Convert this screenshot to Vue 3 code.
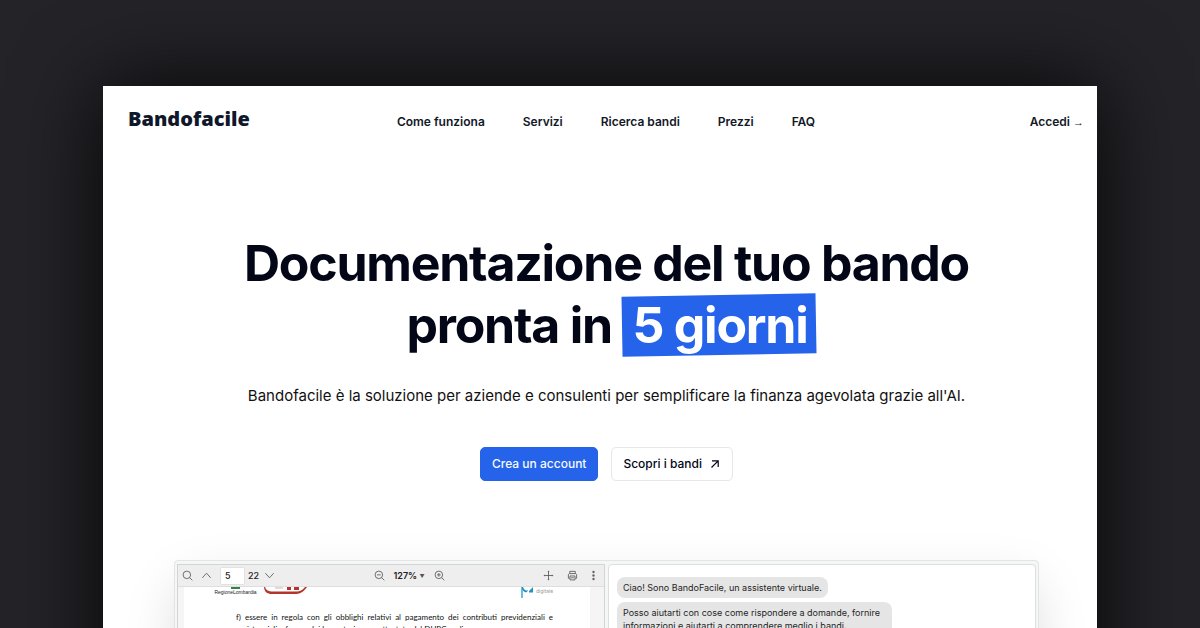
<script setup>
const links = ['Come funziona', 'Servizi', 'Ricerca bandi', 'Prezzi', 'FAQ']
</script>

<template>
  <div class="stage">
    <div class="page">
      <header class="header">
        <a class="brand" href="#">Bandofacile</a>
        <nav class="nav">
          <a v-for="link in links" :key="link" href="#">{{ link }}</a>
        </nav>
        <a class="login" href="#">Accedi <span class="arrow">→</span></a>
      </header>

      <main class="main">
        <h1>Documentazione del tuo bando<br />pronta in <span class="mark"><span class="mark-text">5 giorni</span></span></h1>
        <p class="lead">Bandofacile è la soluzione per aziende e consulenti per semplificare la finanza agevolata grazie all'AI.</p>
        <div class="actions">
          <button class="btn primary" type="button">Crea un account</button>
          <button class="btn" type="button">
            Scopri i bandi
            <svg width="12" height="12" viewBox="0 0 12 12" fill="none" stroke="currentColor" stroke-width="1.2"><path d="M2.500 9.500 9.200 2.800M3 2.800h6.200V9" /></svg>
          </button>
        </div>

        <section class="preview">
          <div class="pane viewer">
            <div class="toolbar">
              <svg class="ico" viewBox="0 0 12 12"><circle cx="5.300" cy="5.300" r="4.100" /><path d="m8.300 8.300 3 3" /></svg>
              <svg class="ico" viewBox="0 0 12 12"><path d="m1.500 8.500 4.500-5 4.500 5" /></svg>
              <input class="num" type="text" value="5" aria-label="Pagina" />
              <span class="total">22</span>
              <svg class="ico" viewBox="0 0 12 12"><path d="m1.500 3.500 4.500 5 4.500-5" /></svg>
              <div class="zoom">
                <svg class="ico" viewBox="0 0 12 12"><circle cx="5.300" cy="5.300" r="4.100" /><path d="m8.300 8.300 3 3M3.300 5.300h4" /></svg>
                <span class="pct">127% <span class="tri">▼</span></span>
                <svg class="ico" viewBox="0 0 12 12"><circle cx="5.300" cy="5.300" r="4.100" /><path d="m8.300 8.300 3 3M3.300 5.300h4M5.300 3.300v4" /></svg>
              </div>
              <div class="tools">
                <svg class="ico" viewBox="0 0 12 12"><path d="M6 1.500v9M1.500 6h9" /><path d="M6 .5 4.800 2.300h2.400zM6 11.500 4.800 9.700h2.400zM.5 6l1.800-1.200v2.400zM11.500 6 9.700 4.800v2.400z" class="solid" /></svg>
                <svg class="ico" viewBox="0 0 12 12"><path d="M3 3.700V1.500h6v2.200M3 9H1.500V5.200l1-1.300h7l1 1.300V9H9M3.300 6.500h5.400v4.300H3.300zM4.500 8.500h3" /></svg>
                <svg class="ico dots" viewBox="0 0 5 12"><circle cx="2.500" cy="2.200" r="1.300" /><circle cx="2.500" cy="6" r="1.300" /><circle cx="2.500" cy="9.800" r="1.300" /></svg>
              </div>
            </div>
            <div class="doc">
              <div class="sheet">
                <div class="logos">
                  <div class="region"><i></i><span>RegioneLombardia</span></div>
                  <svg width="46" height="8" viewBox="0 0 46 8"><path d="M1 0C1.500 5 4 7 9 7h24c5 0 8-3 11-7h-2c-3 3.500-5 4.500-9 4.500H10C5 4.500 3 3 2 0z" fill="#b5342c" /><path d="M24 0h4v3h-4zM31 0h5v3h-5z" fill="#b5342c" /><path d="M12 1h8" stroke="#bbb" /></svg>
                  <svg class="agency" width="13" height="12" viewBox="0 0 13 12"><path d="M1 0v11" stroke="#1f9bd0" stroke-width="1.300" /><path d="M1 0h1c1 3 3 4 5 3l-1 2C4 6 2 4 1 2zM8 4l4-4v5.500H8z" fill="#2294c3" /></svg>
                  <span class="digital">digitale</span>
                </div>
                <p class="clause"><span>f) essere in regola con gli obblighi relativi al pagamento dei contributi previdenziali e</span><span class="rest">assistenziali a favore dei lavoratori come attestato dal DURC on line;</span></p>
              </div>
            </div>
          </div>
          <div class="pane chat">
            <p class="bubble">Ciao! Sono BandoFacile, un assistente virtuale.</p>
            <p class="bubble">Posso aiutarti con cose come rispondere a domande, fornire informazioni e aiutarti a comprendere meglio i bandi.</p>
          </div>
        </section>
      </main>
    </div>
  </div>
</template>

<style>
body {
  background: #242328;
}
</style>

<style scoped>
* {
  box-sizing: border-box;
}
.stage {
  height: 100vh;
  overflow: hidden;
  padding: 86px 103px 0;
  font-family: Inter, "Liberation Sans", sans-serif;
  color: #020617;
}
.page {
  min-height: 100%;
  background: #fff;
  box-shadow: 0 0 80px 0 rgba(0, 0, 0, 0.9);
}
a {
  color: inherit;
  text-decoration: none;
}
.header {
  display: flex;
  align-items: center;
  height: 72px;
  padding: 0 13px 0 25px;
}
.brand {
  flex: 1;
  font: 800 20px/28px "Open Sans", sans-serif;
  color: #0f172a;
  padding-bottom: 6px;
}
.nav {
  display: flex;
  gap: 38px;
}
.nav,
.login {
  font-size: 12px;
  line-height: 20px;
  font-weight: 600;
  color: #111827;
}
.login {
  flex: 1;
  text-align: right;
}
.arrow {
  font: 11px "Liberation Sans", sans-serif;
}
.main {
  padding: 74px 58px 0 71px;
  text-align: center;
}
h1 {
  margin: 0;
  font-size: 50px;
  line-height: 62px;
  font-weight: 700;
  letter-spacing: -0.025em;
}
.mark {
  position: relative;
  display: inline-block;
  margin-right: -10px;
  padding: 0 9px 0 10px;
  color: #fff;
}
.mark::before {
  content: "";
  position: absolute;
  inset: 1px 0;
  background: #2563eb;
  transform: rotate(-1deg);
}
.mark-text {
  position: relative;
}
.lead {
  margin: 26px 0 0;
  font-size: 15px;
  line-height: 28px;
  color: #111;
}
.actions {
  display: flex;
  justify-content: center;
  gap: 13px;
  margin-top: 37px;
}
.btn {
  display: flex;
  align-items: center;
  gap: 7px;
  height: 34px;
  padding: 0 11px;
  border: 1px solid #e5e7eb;
  border-radius: 5px;
  background: #fff;
  color: #020617;
  font: 500 12px/18px Inter, sans-serif;
}
.primary {
  border-color: #2563eb;
  background: #2563eb;
  color: #f8fafc;
}
.preview {
  display: grid;
  grid-template-columns: 1fr 1fr;
  gap: 3px;
  height: 360px;
  margin-top: 79px;
  padding: 3px 2px;
  border: 1px solid #e2e5e5;
  border-radius: 4px;
  background: #f5f7f7;
  box-shadow: 0 20px 50px -5px rgba(0, 0, 0, 0.15);
  text-align: left;
}
.pane {
  min-width: 0;
  border: 1px solid #dcdfdf;
  background: #fff;
  overflow: hidden;
}
.viewer {
  border-color: #d4d4d6;
}
.toolbar {
  display: flex;
  align-items: center;
  gap: 8px;
  height: 22px;
  padding: 0 8px 0 4px;
  background: #eeeeef;
  border-bottom: 1px solid #dededf;
  font-size: 9px;
  font-weight: 500;
  color: #222;
}
.ico {
  flex: none;
  width: 11px;
  height: 11px;
  fill: none;
  stroke: #555;
  stroke-width: 0.9;
}
.solid,
.dots {
  fill: #666;
  stroke: none;
}
.dots {
  width: 5px;
}
.num {
  width: 25px;
  height: 18px;
  padding: 0 4px;
  border: 1px solid #e2e2e3;
  border-radius: 2px;
  background: #fff;
  color: #222;
  font: 500 9px/16px Inter, sans-serif;
}
.total {
  margin: 0 -3px 0 -5px;
}
.zoom {
  display: flex;
  align-items: center;
  gap: 9px;
  margin: 0 auto;
}
.pct {
  font-weight: 600;
}
.tri {
  font-size: 5px;
  vertical-align: 1px;
  color: #555;
}
.tools {
  display: flex;
  align-items: center;
  gap: 13px;
}
.doc {
  background: #f5f5f6;
  height: 100%;
  padding: 0 14px 0 6px;
}
.sheet {
  height: 100%;
  padding: 0 37px 0 31px;
  background: #fff;
}
.logos {
  display: flex;
  align-items: flex-start;
  height: 24px;
}
.region {
  display: flex;
  flex-direction: column;
  align-items: center;
  width: 41px;
  margin-right: 7px;
  font: 5px/6px "Liberation Sans", sans-serif;
  color: #222;
}
.region i {
  width: 9px;
  height: 2px;
  background: #34804a;
}
.agency {
  margin-left: auto;
}
.digital {
  margin-left: 2px;
  width: 17px;
  font-size: 5px;
  line-height: 8px;
  color: #999;
}
.clause {
  margin: 0 0 0 21px;
  font: 8px/12px Lato, sans-serif;
  color: #111;
}
.clause span {
  display: block;
  text-align: justify;
  text-align-last: justify;
}
.clause .rest {
  text-align-last: left;
}
.chat {
  display: flex;
  flex-direction: column;
  align-items: flex-start;
  gap: 4px;
  padding: 12px 8px;
  border-radius: 4px;
}
.bubble {
  max-width: 275px;
  margin: 0;
  padding: 4px 6px;
  border-radius: 8px;
  background: #e5e5e5;
  color: #1f1f1f;
  font-size: 9px;
  line-height: 13px;
}
</style>
